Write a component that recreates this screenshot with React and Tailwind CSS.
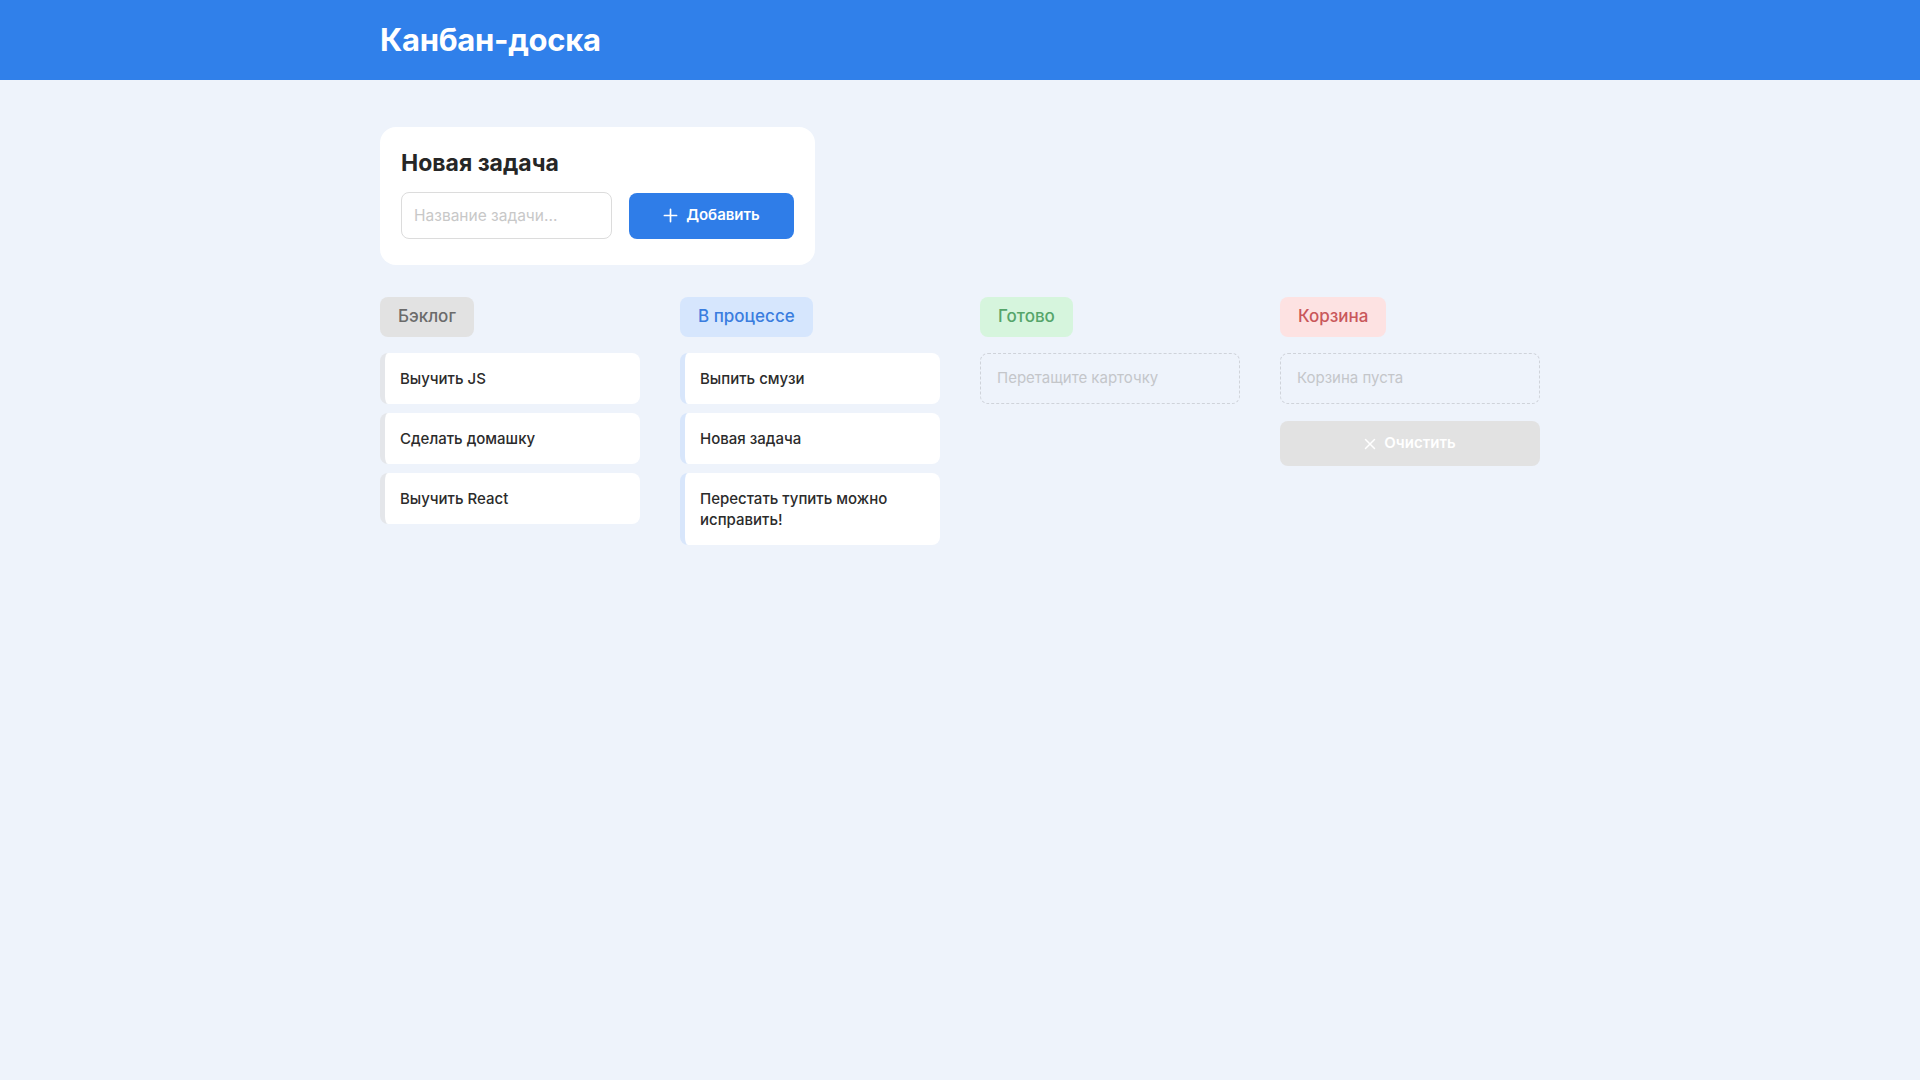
import React from "react";

const font = { fontFamily: "Inter, 'Noto Sans', sans-serif" };

function Card({ text, border }) {
  return (
    <div className={`bg-white rounded-lg border-l-[5px] ${border} pl-[15px] pr-4 py-[15px] text-[15px] leading-[21px] font-medium text-[#2b2b2b]`}>
      {text}
    </div>
  );
}

function Column({ title, badge, children }) {
  return (
    <div className="flex flex-col">
      <div className="flex">
        <div className={`h-[40px] px-[18px] flex items-center rounded-lg text-[17px] font-medium ${badge}`}>{title}</div>
      </div>
      <div className="mt-4 flex flex-col gap-[9px]">{children}</div>
    </div>
  );
}

export default function App() {
  return (
    <div className="min-h-screen bg-[#eef3fb]" style={font}>
      <header className="h-[80px] bg-[#3080ea] flex items-center">
        <div className="w-[1160px] mx-auto">
          <h1 className="text-[31px] font-bold text-white tracking-[-0.3px]">Канбан-доска</h1>
        </div>
      </header>
      <main className="w-[1160px] mx-auto pt-[47px]">
        <div className="w-[435px] bg-white rounded-2xl px-[21px] pt-[22px] pb-[26px]">
          <h2 className="text-[23px] leading-[28px] font-bold text-[#262626]">Новая задача</h2>
          <div className="mt-[15px] flex gap-[17px] items-center">
            <input
              placeholder="Название задачи..."
              className="w-[211px] h-[47px] border border-[#dcdcdc] rounded-lg px-3 text-[15.5px] outline-none placeholder:text-[#c8c8c8]"
            />
            <button className="w-[165px] h-[46px] rounded-lg bg-[#2f7de8] text-white text-[15px] font-semibold flex items-center justify-center gap-2">
              <svg width="15" height="15" viewBox="0 0 16 16" fill="none" stroke="white" strokeWidth="1.8" strokeLinecap="round">
                <path d="M8 1.5v13M1.5 8h13" />
              </svg>
              Добавить
            </button>
          </div>
        </div>

        <div className="mt-8 grid grid-cols-4 gap-10 w-[1160px]">
          <Column title="Бэклог" badge="bg-[#e2e2e2] text-[#6b6b6b]">
            <Card text="Выучить JS" border="border-[#e4e6ea]" />
            <Card text="Сделать домашку" border="border-[#e4e6ea]" />
            <Card text="Выучить React" border="border-[#e4e6ea]" />
          </Column>
          <Column title="В процессе" badge="bg-[#d6e6fd] text-[#3a7ddf]">
            <Card text="Выпить смузи" border="border-[#d8e6fb]" />
            <Card text="Новая задача" border="border-[#d8e6fb]" />
            <Card text="Перестать тупить можно исправить!" border="border-[#d8e6fb]" />
          </Column>
          <Column title="Готово" badge="bg-[#d6f5dd] text-[#55a56a]">
            <div className="h-[51px] rounded-lg border border-dashed border-[#cfd3da] flex items-center px-4 text-[15px] text-[#c4c6ca]">
              Перетащите карточку
            </div>
          </Column>
          <Column title="Корзина" badge="bg-[#fde2e2] text-[#c9575a]">
            <div className="h-[51px] rounded-lg border border-dashed border-[#cfd3da] flex items-center px-4 text-[15px] text-[#c4c6ca]">
              Корзина пуста
            </div>
            <button className="mt-[8px] h-[45px] rounded-lg bg-[#e2e2e2] text-white text-[15px] font-semibold flex items-center justify-center gap-2">
              <svg width="12" height="12" viewBox="0 0 12 12" fill="none" stroke="white" strokeWidth="1.5" strokeLinecap="round">
                <path d="M1.5 1.5l9 9M10.5 1.5l-9 9" />
              </svg>
              Очистить
            </button>
          </Column>
        </div>
      </main>
    </div>
  );
}
